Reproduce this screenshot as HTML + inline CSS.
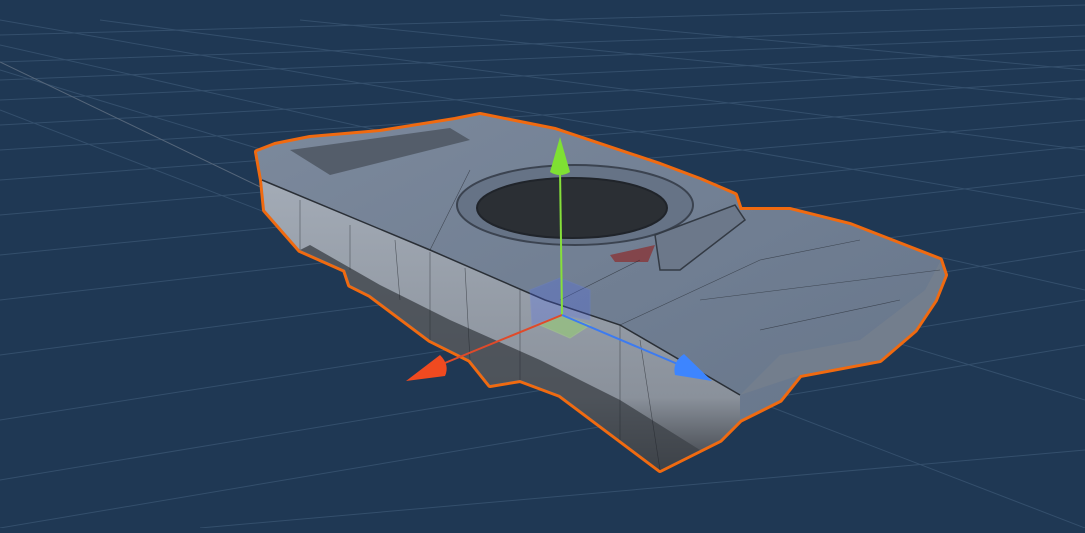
<!DOCTYPE html>
<html><head><style>html,body{margin:0;padding:0;background:#1f3854;overflow:hidden}</style></head>
<body>
<svg width="1085" height="528" viewBox="0 0 1085 528" xmlns="http://www.w3.org/2000/svg">
<defs>
<linearGradient id="top" x1="0" y1="0" x2="1" y2="1"><stop offset="0" stop-color="#7c899c"/><stop offset="1" stop-color="#657489"/></linearGradient>
<linearGradient id="side" x1="0" y1="0" x2="0" y2="1"><stop offset="0" stop-color="#a3abb6"/><stop offset="0.75" stop-color="#8a919b"/><stop offset="1" stop-color="#3c4046"/></linearGradient>
</defs>
<rect width="1085" height="528" fill="#1f3854"/>
<g stroke="#344f6c" stroke-width="1" fill="none">
<path d="M0 62 L1085 25 M0 100 L1085 50 M0 150 L1085 80 M0 215 L1085 120 M0 300 L1085 175 M0 420 L1085 250 M0 528 L1085 345 M200 528 L1085 450"/>
<path d="M0 20 L1085 210 M0 45 L1085 290 M0 70 L1085 400 M0 110 L1085 528 M100 20 L1085 150 M300 20 L1085 100 M500 15 L1085 70"/>
<path d="M0 35 L1085 5 M0 80 L1085 36 M0 125 L1085 65 M0 180 L1085 98 M0 255 L1085 146 M0 355 L1085 212 M0 480 L1085 300"/>
</g>
<path d="M0 62 L350 230" stroke="#55667a" stroke-width="1"/>
<path d="M257 152 L275 145 L310 138 L380 132 L455 120 L480 115 L555 130 L660 165 L700 180 L735 195 L740 210 L790 210 L850 225 L940 260 L945 275 L935 300 L915 330 L880 360 L800 375 L780 400 L740 420 L720 440 L660 470 L620 440 L560 395 L520 380 L490 385 L470 360 L430 340 L410 325 L370 295 L350 285 L345 270 L300 250 L265 210 L262 180 Z" fill="#f06a10" stroke="#f06a10" stroke-width="6" stroke-linejoin="round"/>
<path d="M257 152 L275 145 L310 138 L380 132 L455 120 L480 115 L555 130 L660 165 L700 180 L735 195 L740 210 L790 210 L850 225 L940 260 L945 275 L935 300 L915 330 L880 360 L800 375 L780 400 L740 420 L720 440 L660 470 L620 440 L560 395 L520 380 L490 385 L470 360 L430 340 L410 325 L370 295 L350 285 L345 270 L300 250 L265 210 L262 180 Z" fill="url(#top)"/>
<path d="M262 180 L430 250 L545 300 L620 325 L740 395 L740 420 L720 440 L660 470 L620 440 L560 395 L520 380 L490 385 L470 360 L430 340 L410 325 L370 295 L350 285 L345 270 L300 250 L265 210 Z" fill="url(#side)"/>
<path d="M300 250 L345 270 L350 285 L370 295 L410 325 L430 340 L470 360 L490 385 L520 380 L560 395 L620 440 L660 470 L700 450 L620 400 L540 360 L450 320 L380 285 L310 245 Z" fill="#3e434a" opacity=".8"/>
<path d="M740 395 L800 375 L880 360 L915 330 L935 300 L945 275 L940 262 L925 290 L860 340 L780 355 Z" fill="#737e8d"/>
<path d="M262 180 L430 250 L545 300 L620 325 L740 395" stroke="#2a2f36" stroke-width="1.5" fill="none"/>
<path d="M290 150 L450 128 L470 140 L330 175 Z" fill="#4b535e" opacity=".8"/>
<ellipse cx="575" cy="205" rx="118" ry="40" fill="#667386" stroke="#3b4350" stroke-width="2"/>
<ellipse cx="572" cy="208" rx="95" ry="30" fill="#2b2f34" stroke="#20242a" stroke-width="2"/>
<path d="M655 235 L735 205 L745 220 L680 270 L660 270 Z" fill="#6c788a" stroke="#333a44" stroke-width="1.5"/>
<path d="M610 255 L655 245 L648 262 L615 262 Z" fill="#8c2c2c" opacity=".7"/>
<g stroke="#1e2228" stroke-width=".6" fill="none" opacity=".6">
<path d="M300 250 L300 200 M350 270 L350 225 M400 300 L395 240 M430 340 L430 252 M470 360 L465 268 M520 380 L520 290 M620 440 L620 325 M660 470 L640 340"/>
<path d="M620 325 L760 260 L860 240 M700 300 L940 270 M760 330 L900 300 M430 250 L470 170 M560 300 L640 260"/>
</g>
<path d="M530 290 L560 278 L590 290 L590 320 L562 315 L532 325 Z" fill="#4a6aff" opacity=".25" stroke="#5b7bff" stroke-width="1"/>
<path d="M540 325 L562 315 L590 325 L570 338 Z" fill="#9cff4a" opacity=".3" stroke="#b8ff6a" stroke-width="1"/>
<line x1="562" y1="315" x2="560" y2="168" stroke="#86e03a" stroke-width="2"/>
<path d="M560 137 L570 172 Q560 178 550 172 Z" fill="#7fe033"/>
<line x1="562" y1="315" x2="440" y2="365" stroke="#e04a2a" stroke-width="2"/>
<path d="M406 381 L440 355 Q450 365 445 376 Z" fill="#f04a20"/>
<line x1="562" y1="315" x2="680" y2="365" stroke="#3d7bf0" stroke-width="2"/>
<path d="M712 381 L675 375 Q672 362 684 354 Z" fill="#3d85ff"/>
</svg>
</body></html>
